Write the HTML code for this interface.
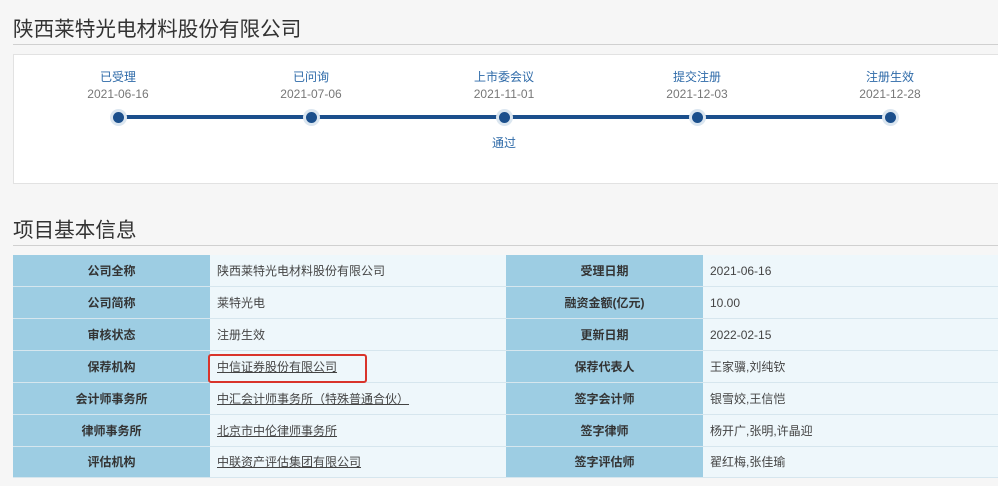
<html><head><style>
body{margin:0;width:998px;height:486px;background:#f6f6f6;font-family:"Liberation Sans","Noto Sans CJK SC",sans-serif;position:relative;overflow:hidden}
.h{position:absolute;left:13px;font-size:20.6px;color:#333}
.line{position:absolute;left:13px;right:0;height:1px;background:#d0d0d0}
.box{position:absolute;left:13px;top:54px;width:990px;height:128px;background:#fff;border:1px solid #e2e2e2}
.n{position:absolute;width:120px;text-align:center;font-size:12px}
.n b{display:block;color:#2e6aa8;font-weight:normal}
.n i{display:block;font-style:normal;color:#777;margin-top:2px}
.dot{position:absolute;width:11px;height:11px;border-radius:50%;background:#1b4f8c;box-shadow:0 0 0 3px #dbe6f0}
table{position:absolute;left:13px;top:255px;width:1000px;border-collapse:collapse;font-size:12px;table-layout:fixed}
tr{height:31.85px}
td{padding:0;border-bottom:1px solid #d6e6ee}
td.l{background:#9dcde3;text-align:center;color:#333;font-weight:bold}
td.v{background:#eef7fb;color:#444;padding-left:7px}
u{color:#444}
</style></head><body>
<div class="h" style="top:12px">陕西莱特光电材料股份有限公司</div>
<div class="line" style="top:44px"></div>
<div class="box"></div>
<div style="position:absolute;left:118px;top:115px;width:772px;height:4px;background:#1b4f8c"></div>
<div class="n" style="left:58px;top:68px"><b>已受理</b><i>2021-06-16</i></div>
<div class="n" style="left:251px;top:68px"><b>已问询</b><i>2021-07-06</i></div>
<div class="n" style="left:444px;top:68px"><b>上市委会议</b><i>2021-11-01</i></div>
<div class="n" style="left:637px;top:68px"><b>提交注册</b><i>2021-12-03</i></div>
<div class="n" style="left:830px;top:68px"><b>注册生效</b><i>2021-12-28</i></div>
<div class="dot" style="left:113px;top:112px"></div>
<div class="dot" style="left:306px;top:112px"></div>
<div class="dot" style="left:499px;top:112px"></div>
<div class="dot" style="left:692px;top:112px"></div>
<div class="dot" style="left:885px;top:112px"></div>
<div class="n" style="left:444px;top:134px"><b>通过</b></div>
<div class="h" style="top:213px">项目基本信息</div>
<div class="line" style="top:245px"></div>
<table>
<colgroup><col style="width:197px"><col style="width:296px"><col style="width:197px"><col style="width:310px"></colgroup>
<tr><td class="l">公司全称</td><td class="v">陕西莱特光电材料股份有限公司</td><td class="l">受理日期</td><td class="v">2021-06-16</td></tr>
<tr><td class="l">公司简称</td><td class="v">莱特光电</td><td class="l">融资金额(亿元)</td><td class="v">10.00</td></tr>
<tr><td class="l">审核状态</td><td class="v">注册生效</td><td class="l">更新日期</td><td class="v">2022-02-15</td></tr>
<tr><td class="l">保荐机构</td><td class="v"><u>中信证券股份有限公司</u></td><td class="l">保荐代表人</td><td class="v">王家骥,刘纯钦</td></tr>
<tr><td class="l">会计师事务所</td><td class="v"><u>中汇会计师事务所（特殊普通合伙）</u></td><td class="l">签字会计师</td><td class="v">银雪姣,王信恺</td></tr>
<tr><td class="l">律师事务所</td><td class="v"><u>北京市中伦律师事务所</u></td><td class="l">签字律师</td><td class="v">杨开广,张明,许晶迎</td></tr>
<tr><td class="l">评估机构</td><td class="v"><u>中联资产评估集团有限公司</u></td><td class="l">签字评估师</td><td class="v">翟红梅,张佳瑜</td></tr>
</table>
<div style="position:absolute;left:208px;top:354px;width:155px;height:25px;border:2px solid #d9342b;border-radius:3px"></div>
</body></html>
